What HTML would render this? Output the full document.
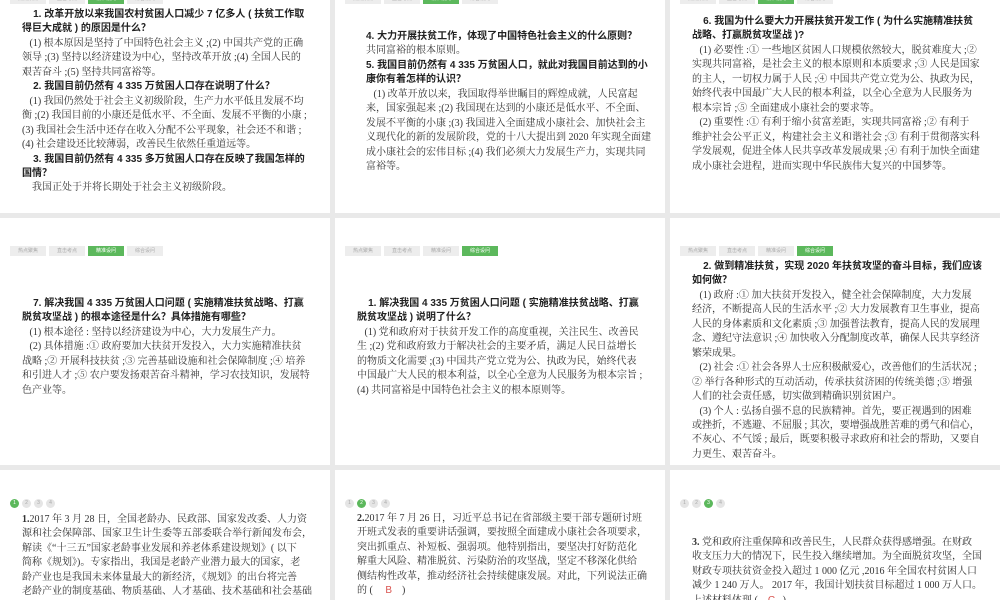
<!DOCTYPE html>
<html><head><meta charset="utf-8"><style>
*{margin:0;padding:0;box-sizing:border-box}
body{width:1000px;height:600px;background:#e9e9e9;position:relative;overflow:hidden}
.s{position:absolute;background:#fff;overflow:hidden}
.t{position:absolute;font-family:"Liberation Serif","Noto Serif CJK SC",serif;font-size:10px;line-height:14.45px;color:#333;white-space:nowrap}
.q{font-family:"Liberation Sans","Noto Sans CJK SC",sans-serif;font-weight:bold;color:#222}
.tabs{position:absolute;display:flex;gap:3px}
.tabs span{display:block;width:36px;height:10px;background:#ededed;color:#aaa;font-family:"Noto Sans CJK SC",sans-serif;font-size:5px;line-height:10px;text-align:center}
.tabs span.on{background:#5cb85c;color:#fff}
.dots{position:absolute;display:flex;gap:3px}
.dots span{width:9px;height:9px;border-radius:50%;background:#e5e5e5;color:#aaa;font-size:5px;line-height:9px;text-align:center;font-family:"Liberation Sans",sans-serif}
.dots span.on{background:#5cb85c;color:#fff}
.r{color:#d9534f;font-family:"Liberation Sans",sans-serif}
</style></head><body>

<div class="s" style="left:0;top:0;width:330px;height:213px">
<div class="tabs" style="left:10px;top:-6px"><span>热点聚焦</span><span>直击考点</span><span class="on">精准设问</span><span>综合设问</span></div>
<div class="t" style="left:22px;top:8px">
<span class="q">&nbsp;&nbsp;&nbsp;&nbsp;1. 改革开放以来我国农村贫困人口减少 7 亿多人 ( 扶贫工作取<br>得巨大成就 ) 的原因是什么？</span><br>
&nbsp;&nbsp;&nbsp;(1) 根本原因是坚持了中国特色社会主义 ;(2) 中国共产党的正确<br>
领导 ;(3) 坚持以经济建设为中心，坚持改革开放 ;(4) 全国人民的<br>
艰苦奋斗 ;(5) 坚持共同富裕等。<br>
<span class="q">&nbsp;&nbsp;&nbsp;&nbsp;2. 我国目前仍然有 4 335 万贫困人口存在说明了什么？</span><br>
&nbsp;&nbsp;&nbsp;(1) 我国仍然处于社会主义初级阶段，生产力水平低且发展不均<br>
衡 ;(2) 我国目前的小康还是低水平、不全面、发展不平衡的小康 ;<br>
(3) 我国社会生活中还存在收入分配不公平现象，社会还不和谐 ;<br>
(4) 社会建设还比较薄弱，改善民生依然任重道远等。<br>
<span class="q">&nbsp;&nbsp;&nbsp;&nbsp;3. 我国目前仍然有 4 335 多万贫困人口存在反映了我国怎样的<br>国情？</span><br>
&nbsp;&nbsp;&nbsp;&nbsp;我国正处于并将长期处于社会主义初级阶段。
</div></div>

<div class="s" style="left:335px;top:0;width:330px;height:213px">
<div class="tabs" style="left:10px;top:-6px"><span>热点聚焦</span><span>直击考点</span><span class="on">精准设问</span><span>综合设问</span></div>
<div class="t" style="left:31px;top:30px">
<span class="q">4. 大力开展扶贫工作，体现了中国特色社会主义的什么原则？</span><br>
共同富裕的根本原则。<br>
<span class="q">5. 我国目前仍然有 4 335 万贫困人口，就此对我国目前达到的小<br>康你有着怎样的认识？</span><br>
&nbsp;&nbsp;&nbsp;(1) 改革开放以来，我国取得举世瞩目的辉煌成就，人民富起<br>
来，国家强起来 ;(2) 我国现在达到的小康还是低水平、不全面、<br>
发展不平衡的小康 ;(3) 我国进入全面建成小康社会、加快社会主<br>
义现代化的新的发展阶段，党的十八大提出到 2020 年实现全面建<br>
成小康社会的宏伟目标 ;(4) 我们必须大力发展生产力，实现共同<br>
富裕等。
</div></div>

<div class="s" style="left:670px;top:0;width:330px;height:213px">
<div class="tabs" style="left:10px;top:-6px"><span>热点聚焦</span><span>直击考点</span><span class="on">精准设问</span><span>综合设问</span></div>
<div class="t" style="left:22px;top:15px">
<span class="q">&nbsp;&nbsp;&nbsp;&nbsp;6. 我国为什么要大力开展扶贫开发工作 ( 为什么实施精准扶贫<br>战略、打赢脱贫攻坚战 )?</span><br>
&nbsp;&nbsp;&nbsp;(1) 必要性 :① 一些地区贫困人口规模依然较大，脱贫难度大 ;②<br>
实现共同富裕，是社会主义的根本原则和本质要求 ;③ 人民是国家<br>
的主人，一切权力属于人民 ;④ 中国共产党立党为公、执政为民，<br>
始终代表中国最广大人民的根本利益，以全心全意为人民服务为<br>
根本宗旨 ;⑤ 全面建成小康社会的要求等。<br>
&nbsp;&nbsp;&nbsp;(2) 重要性 :① 有利于缩小贫富差距，实现共同富裕 ;② 有利于<br>
维护社会公平正义，构建社会主义和谐社会 ;③ 有利于贯彻落实科<br>
学发展观，促进全体人民共享改革发展成果 ;④ 有利于加快全面建<br>
成小康社会进程，进而实现中华民族伟大复兴的中国梦等。
</div></div>

<div class="s" style="left:0;top:218px;width:330px;height:247px">
<div class="tabs" style="left:10px;top:28px"><span>热点聚焦</span><span>直击考点</span><span class="on">精准设问</span><span>综合设问</span></div>
<div class="t" style="left:22px;top:79px">
<span class="q">&nbsp;&nbsp;&nbsp;&nbsp;7. 解决我国 4 335 万贫困人口问题 ( 实施精准扶贫战略、打赢<br>脱贫攻坚战 ) 的根本途径是什么？具体措施有哪些？</span><br>
&nbsp;&nbsp;&nbsp;(1) 根本途径 : 坚持以经济建设为中心，大力发展生产力。<br>
&nbsp;&nbsp;&nbsp;(2) 具体措施 :① 政府要加大扶贫开发投入，大力实施精准扶贫<br>
战略 ;② 开展科技扶贫 ;③ 完善基础设施和社会保障制度 ;④ 培养<br>
和引进人才 ;⑤ 农户要发扬艰苦奋斗精神，学习农技知识，发展特<br>
色产业等。
</div></div>

<div class="s" style="left:335px;top:218px;width:330px;height:247px">
<div class="tabs" style="left:10px;top:28px"><span>热点聚焦</span><span>直击考点</span><span>精准设问</span><span class="on">综合设问</span></div>
<div class="t" style="left:22px;top:79px">
<span class="q">&nbsp;&nbsp;&nbsp;&nbsp;1. 解决我国 4 335 万贫困人口问题 ( 实施精准扶贫战略、打赢<br>脱贫攻坚战 ) 说明了什么？</span><br>
&nbsp;&nbsp;&nbsp;(1) 党和政府对于扶贫开发工作的高度重视，关注民生、改善民<br>
生 ;(2) 党和政府致力于解决社会的主要矛盾，满足人民日益增长<br>
的物质文化需要 ;(3) 中国共产党立党为公、执政为民，始终代表<br>
中国最广大人民的根本利益，以全心全意为人民服务为根本宗旨 ;<br>
(4) 共同富裕是中国特色社会主义的根本原则等。
</div></div>

<div class="s" style="left:670px;top:218px;width:330px;height:247px">
<div class="tabs" style="left:10px;top:28px"><span>热点聚焦</span><span>直击考点</span><span>精准设问</span><span class="on">综合设问</span></div>
<div class="t" style="left:22px;top:42px">
<span class="q">&nbsp;&nbsp;&nbsp;&nbsp;2. 做到精准扶贫，实现 2020 年扶贫攻坚的奋斗目标，我们应该<br>如何做？</span><br>
&nbsp;&nbsp;&nbsp;(1) 政府 :① 加大扶贫开发投入，健全社会保障制度，大力发展<br>
经济，不断提高人民的生活水平 ;② 大力发展教育卫生事业，提高<br>
人民的身体素质和文化素质 ;③ 加强普法教育，提高人民的发展理<br>
念、遵纪守法意识 ;④ 加快收入分配制度改革，确保人民共享经济<br>
繁荣成果。<br>
&nbsp;&nbsp;&nbsp;(2) 社会 :① 社会各界人士应积极献爱心，改善他们的生活状况 ;<br>
② 举行各种形式的互动活动，传承扶贫济困的传统美德 ;③ 增强<br>
人们的社会责任感，切实做到精确识别贫困户。<br>
&nbsp;&nbsp;&nbsp;(3) 个人 : 弘扬自强不息的民族精神。首先，要正视遇到的困难<br>
或挫折，不逃避、不屈服 ; 其次，要增强战胜苦难的勇气和信心，<br>
不灰心、不气馁 ; 最后，既要积极寻求政府和社会的帮助，又要自<br>
力更生、艰苦奋斗。
</div></div>

<div class="s" style="left:0;top:470px;width:330px;height:130px">
<div class="dots" style="left:10px;top:29px"><span class="on">1</span><span>2</span><span>3</span><span>4</span></div>
<div class="t" style="left:22px;top:43px">
<b>1.</b>2017 年 3 月 28 日，全国老龄办、民政部、国家发改委、人力资<br>
源和社会保障部、国家卫生计生委等五部委联合举行新闻发布会，<br>
解读《“十三五”国家老龄事业发展和养老体系建设规划》( 以下<br>
简称《规划》)。专家指出，我国是老龄产业潜力最大的国家，老<br>
龄产业也是我国未来体量最大的新经济，《规划》的出台将完善<br>
老龄产业的制度基础、物质基础、人才基础、技术基础和社会基础
</div></div>

<div class="s" style="left:335px;top:470px;width:330px;height:130px">
<div class="dots" style="left:10px;top:29px"><span>1</span><span class="on">2</span><span>3</span><span>4</span></div>
<div class="t" style="left:22px;top:42px">
<b>2.</b>2017 年 7 月 26 日，习近平总书记在省部级主要干部专题研讨班<br>
开班式发表的重要讲话强调，要按照全面建成小康社会各项要求，<br>
突出抓重点、补短板、强弱项。他特别指出，要坚决打好防范化<br>
解重大风险、精准脱贫、污染防治的攻坚战，坚定不移深化供给<br>
侧结构性改革，推动经济社会持续健康发展。对此，下列说法正确<br>
的 (&nbsp;&nbsp;&nbsp;&nbsp;&nbsp;<span class="r">B</span>&nbsp;&nbsp;&nbsp;&nbsp;)
</div></div>

<div class="s" style="left:670px;top:470px;width:330px;height:130px">
<div class="dots" style="left:10px;top:29px"><span>1</span><span>2</span><span class="on">3</span><span>4</span></div>
<div class="t" style="left:22px;top:66px">
<b>3.</b> 党和政府注重保障和改善民生，人民群众获得感增强。在财政<br>
收支压力大的情况下，民生投入继续增加。为全面脱贫攻坚，全国<br>
财政专项扶贫资金投入超过 1 000 亿元 ,2016 年全国农村贫困人口<br>
减少 1 240 万人。 2017 年，我国计划扶贫目标超过 1 000 万人口。<br>
上述材料体现 (&nbsp;&nbsp;&nbsp;&nbsp;<span class="r">C</span>&nbsp;&nbsp;&nbsp;)
</div></div>

</body></html>
